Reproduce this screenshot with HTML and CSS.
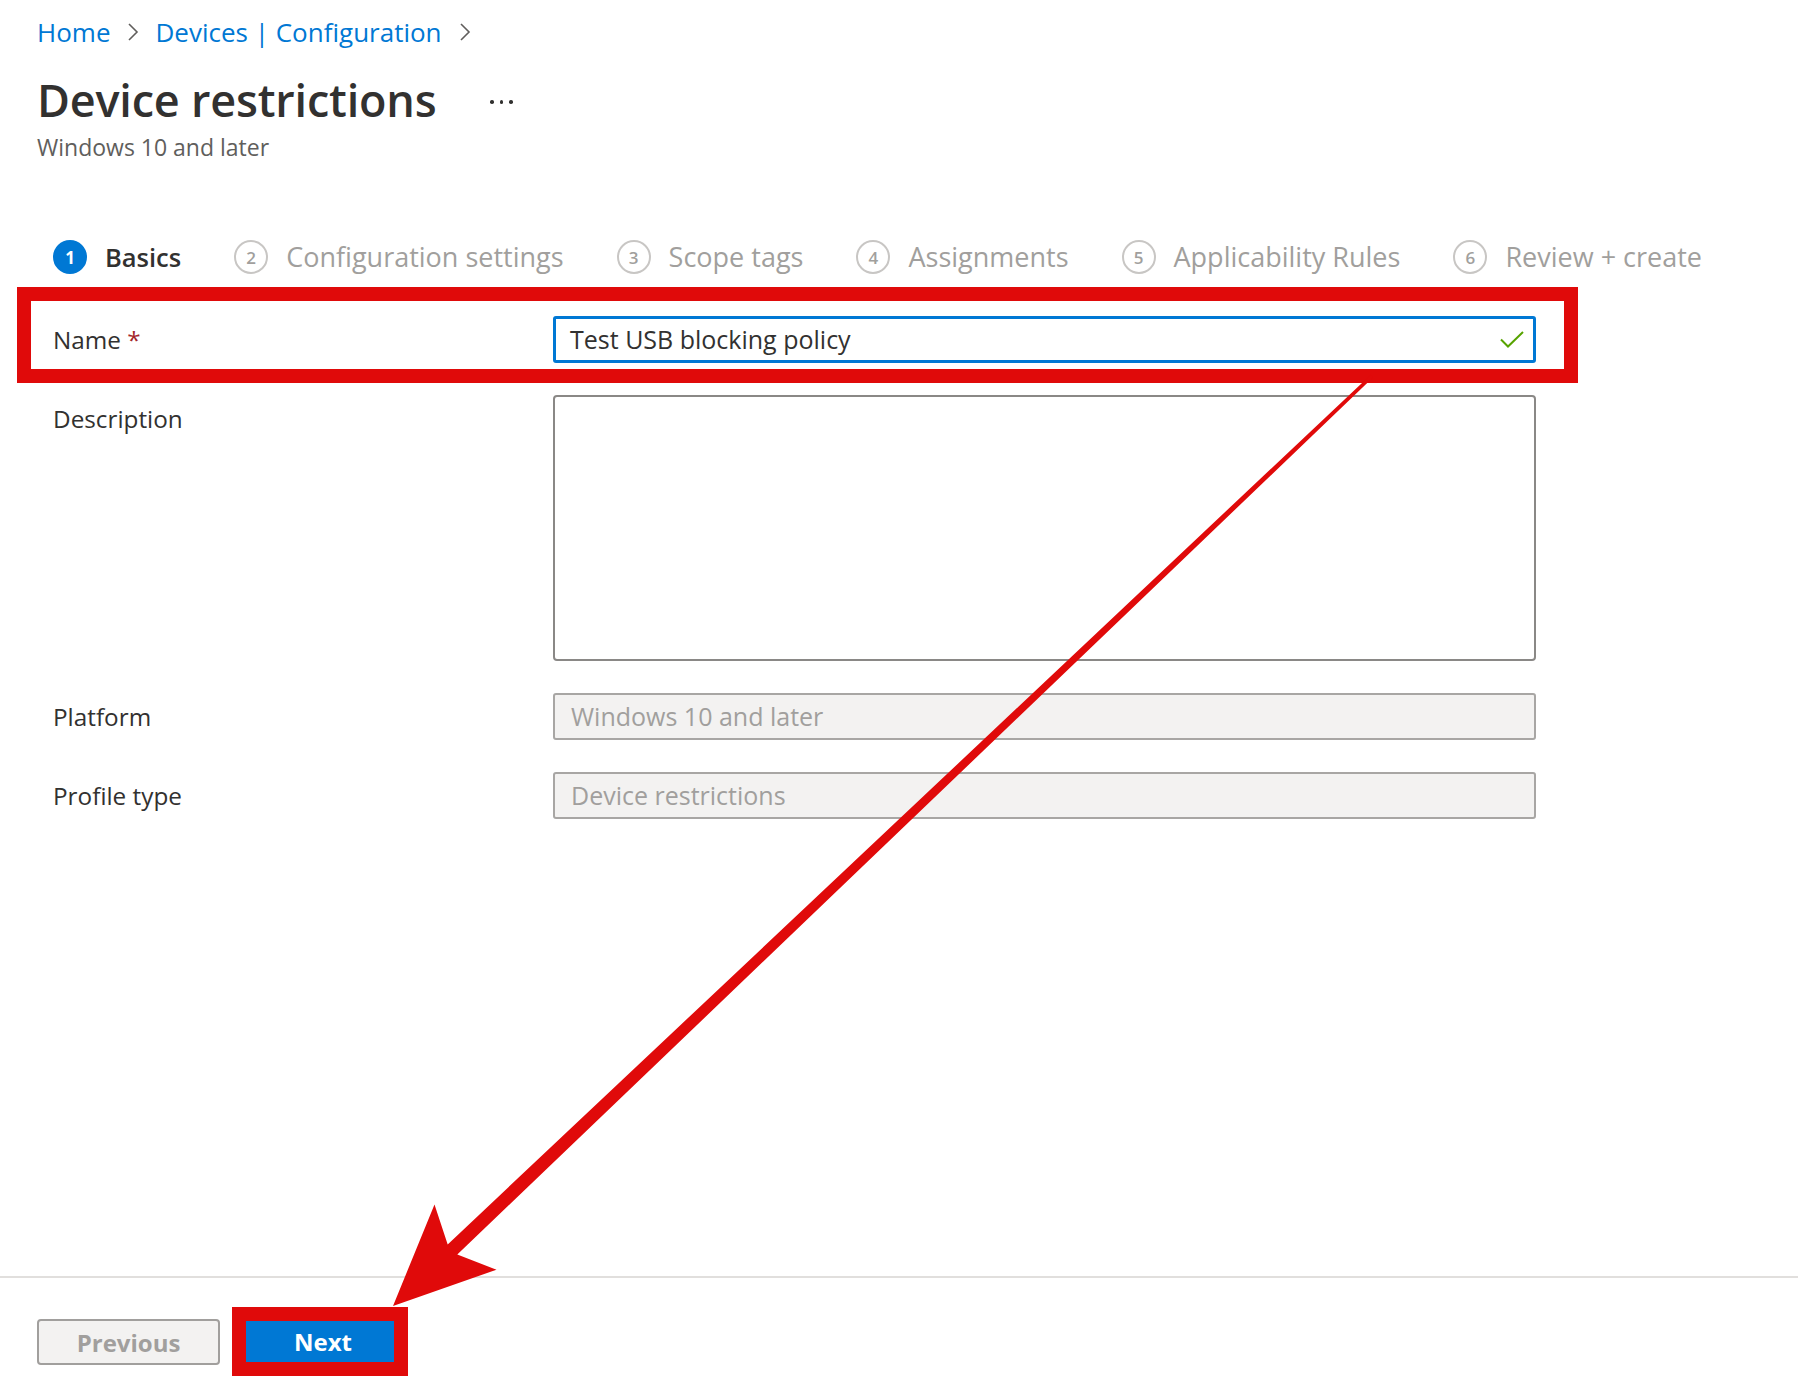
FILE: index.html
```html
<!DOCTYPE html>
<html lang="en">
<head>
<meta charset="utf-8">
<title>Device restrictions</title>
<link rel="stylesheet" href="styles.css">
</head>
<body>
<div class="blade">
  <header class="header">
    <nav class="crumbs">
      <a class="crumb">Home</a>
      <svg class="chev" viewBox="0 0 12 20" width="12" height="20"><polyline points="2,2 10,10 2,18" fill="none" stroke="#605e5c" stroke-width="1.6"/></svg>
      <a class="crumb">Devices | Configuration</a>
      <svg class="chev" viewBox="0 0 12 20" width="12" height="20"><polyline points="2,2 10,10 2,18" fill="none" stroke="#605e5c" stroke-width="1.6"/></svg>
    </nav>
    <div class="title-row">
      <h1 class="title">Device restrictions</h1>
      <span class="more"><i></i><i></i><i></i></span>
    </div>
    <div class="subtitle">Windows 10 and later</div>
  </header>

  <ol class="steps">
    <li class="step active"><span class="num">1</span><span class="lbl">Basics</span></li>
    <li class="step"><span class="num">2</span><span class="lbl">Configuration settings</span></li>
    <li class="step"><span class="num">3</span><span class="lbl">Scope tags</span></li>
    <li class="step"><span class="num">4</span><span class="lbl">Assignments</span></li>
    <li class="step"><span class="num">5</span><span class="lbl">Applicability Rules</span></li>
    <li class="step"><span class="num">6</span><span class="lbl">Review + create</span></li>
  </ol>

  <main class="form">
    <div class="row name-row">
      <label class="label">Name <span class="req">*</span></label>
      <div class="field input focused">
        <span class="val">Test USB blocking policy</span>
        <svg class="check" viewBox="0 0 24 17" width="24" height="17"><polyline points="1,8.5 8,15.5 23,1" fill="none" stroke="#57a300" stroke-width="2"/></svg>
      </div>
      <span class="callout callout-name"></span>
    </div>
    <div class="row">
      <label class="label">Description</label>
      <div class="field textarea"></div>
    </div>
    <div class="row">
      <label class="label">Platform</label>
      <div class="field input disabled">Windows 10 and later</div>
    </div>
    <div class="row">
      <label class="label">Profile type</label>
      <div class="field input disabled">Device restrictions</div>
    </div>
  </main>

  <footer class="footer">
    <button class="btn prev">Previous</button>
    <span class="callout-next"><button class="btn next">Next</button></span>
  </footer>

  <svg class="arrow" viewBox="0 0 1798 1398" width="1798" height="1398">
    <polygon points="1370.8,374.7 447.7,1244.4 434.5,1204.5 393,1306 496.5,1269.7 457.3,1254.6 1373.2,377.3" fill="#e00a0a"/>
  </svg>
</div>
</body>
</html>
```

FILE: styles.css
```css
* { box-sizing: border-box; }

html, body {
  margin: 0;
  padding: 0;
  background: #ffffff;
}

body {
  font-family: "Open Sans", "Noto Sans", "Liberation Sans", sans-serif;
  color: #323130;
}

.blade {
  position: relative;
  display: flex;
  flex-direction: column;
  height: 100vh;
  overflow: hidden;
}

/* Header */
.header {
  padding: 14px 37px 0;
}

.crumbs {
  display: flex;
  align-items: center;
  height: 36px;
  font-size: 26px;
  line-height: 36px;
}

.crumb {
  color: #0078d4;
  text-decoration: none;
}

.chev {
  margin: 0 16px 0 17px;
  flex: none;
}

.title-row {
  display: flex;
  align-items: center;
  margin-top: 22px;
  height: 56px;
}

.title {
  margin: 0;
  font-size: 45px;
  line-height: 56px;
  font-weight: 600;
  color: #323130;
  letter-spacing: -0.2px;
}

.more {
  display: flex;
  gap: 6px;
  margin-left: 54px;
  margin-top: 4px;
}

.more i {
  display: block;
  width: 3.5px;
  height: 3.5px;
  border-radius: 50%;
  background: #323130;
}

.subtitle {
  margin-top: 4px;
  font-size: 23px;
  line-height: 30px;
  color: #605e5c;
}

/* Steps */
.steps {
  list-style: none;
  margin: 75px 0 0;
  padding: 0 0 0 53px;
  display: flex;
  align-items: center;
  gap: 53px;
  height: 40px;
}

.step {
  display: flex;
  align-items: center;
  gap: 18px;
}

.num {
  width: 34px;
  height: 34px;
  border-radius: 50%;
  border: 2px solid #c8c6c4;
  color: #a19f9d;
  font-size: 17px;
  font-weight: 600;
  display: flex;
  align-items: center;
  justify-content: center;
  line-height: 1;
}

.lbl {
  font-size: 27px;
  line-height: 40px;
  color: #a19f9d;
}

.step.active .num {
  background: #0078d4;
  border-color: #0078d4;
  color: #ffffff;
  font-weight: 700;
}

.step.active .lbl {
  color: #323130;
  font-weight: 600;
  font-size: 25.5px;
}

/* Form */
.form {
  padding: 39px 0 0 53px;
  display: flex;
  flex-direction: column;
  gap: 32px;
}

.row {
  position: relative;
  display: flex;
  align-items: flex-start;
}

.label {
  width: 500px;
  flex: none;
  font-size: 24.3px;
  line-height: 47px;
  color: #323130;
}

.req {
  color: #a4262c;
}

.field {
  width: 983px;
  flex: none;
  border-radius: 3px;
}

.input {
  height: 47px;
  display: flex;
  align-items: center;
  padding: 0 14px 0 16px;
  font-size: 25px;
  line-height: 1;
}

.input.focused {
  border: 3px solid #0078d4;
  padding: 0 9px 0 14px;
  color: #323130;
}

.input.focused .val {
  flex: 1;
}

.check {
  flex: none;
}

.textarea {
  height: 266px;
  border: 2px solid #8a8886;
  border-radius: 4px;
}

.input.disabled {
  background: #f3f2f1;
  border: 2px solid #a8a6a4;
  color: #a19f9d;
}

.callout {
  position: absolute;
  border: 14px solid #e00a0a;
  pointer-events: none;
}

.callout-name {
  left: -36px;
  top: -29px;
  width: 1561px;
  height: 96px;
}

/* Footer */
.footer {
  margin-top: auto;
  height: 122px;
  border-top: 2px solid #e1dfdd;
  padding: 29px 37px 0;
  display: flex;
  align-items: flex-start;
}

.btn {
  font-family: "Open Sans", "Noto Sans", "Liberation Sans", sans-serif;
  font-size: 24px;
  font-weight: 700;
  cursor: default;
}

.prev {
  margin-top: 12px;
  width: 183px;
  height: 46px;
  background: #f3f2f1;
  border: 2px solid #a19f9d;
  border-radius: 4px;
  color: #a19f9d;
}

.callout-next {
  display: block;
  margin-left: 12px;
  border: 14px solid #e00a0a;
}

.next {
  display: block;
  width: 148px;
  height: 41px;
  background: #0078d4;
  border: none;
  border-radius: 0;
  color: #ffffff;
  padding: 0 0 0 6px;
}

.arrow {
  position: absolute;
  left: 0;
  top: 0;
  pointer-events: none;
}
```
